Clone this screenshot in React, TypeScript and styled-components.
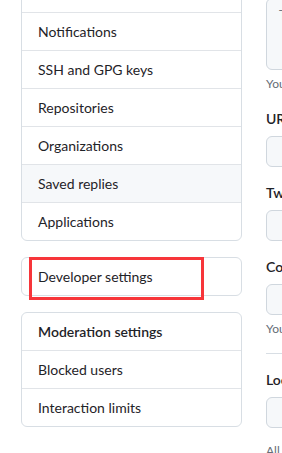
import styled, { createGlobalStyle } from 'styled-components'

const GlobalStyle = createGlobalStyle`
  html, body {
    margin: 0;
    padding: 0;
    overflow: hidden;
    background: #ffffff;
  }
  body {
    font-family: Lato, "Liberation Sans", sans-serif;
    font-size: 14px;
    color: #1f2328;
  }
`

const Page = styled.div`
  display: flex;
  align-items: flex-start;
  gap: 24px;
  padding-left: 21px;
  margin-top: -26px;
  width: 700px;
`

const Sidebar = styled.nav`
  width: 221px;
  flex: none;
  display: flex;
  flex-direction: column;
  gap: 16px;
`

const Menu = styled.div`
  position: relative;
  border: 1px solid #d8dee4;
  border-radius: 6px;
  overflow: visible;
`

const MenuItem = styled.div<{ $active?: boolean; $heading?: boolean }>`
  padding: 8px 16px;
  line-height: 21px;
  font-size: 14px;
  font-weight: ${(p) => (p.$heading ? 600 : 400)};
  background: ${(p) => (p.$active ? '#f6f8fa' : 'transparent')};
  border-top: 1px solid #e1e4e8;
  &:first-child {
    border-top: 0;
    border-radius: 6px 6px 0 0;
  }
  &:last-child {
    border-radius: 0 0 6px 6px;
  }
  &:only-child {
    border-radius: 6px;
  }
`

const Highlight = styled.div`
  position: absolute;
  left: 7px;
  top: -1px;
  width: 175px;
  height: 43px;
  box-sizing: border-box;
  border: 3px solid #f7353a;
  pointer-events: none;
`

const Form = styled.div`
  width: 440px;
  flex: none;
  margin-top: 24px;
`

const TextArea = styled.div`
  box-sizing: border-box;
  height: 72px;
  padding: 6px 12px;
  line-height: 20px;
  color: #6e7781;
  background: #f6f8fa;
  border: 1px solid #d0d7de;
  border-radius: 6px;
`

const Note = styled.p<{ $gap?: number }>`
  margin: ${(p) => p.$gap ?? 5}px 0 0;
  font-size: 12px;
  line-height: 18px;
  color: #656d76;
`

const Group = styled.div`
  margin-top: 15px;
`

const Label = styled.label`
  display: block;
  font-weight: 600;
  font-size: 14px;
  line-height: 21px;
  margin-bottom: 7px;
`

const Input = styled.div`
  box-sizing: border-box;
  height: 31px;
  background: #f6f8fa;
  border: 1px solid #d0d7de;
  border-radius: 6px;
`

const Divider = styled.hr`
  margin: 15px 0 0;
  border: 0;
  border-top: 1px solid #d8dee4;
`

const mainItems = [
  'Emails',
  'Notifications',
  'SSH and GPG keys',
  'Repositories',
  'Organizations',
  'Saved replies',
  'Applications',
]

export default function App() {
  return (
    <>
      <GlobalStyle />
      <Page>
        <Sidebar>
          <Menu>
            {mainItems.map((item) => (
              <MenuItem key={item} $active={item === 'Saved replies'}>
                {item}
              </MenuItem>
            ))}
          </Menu>
          <Menu>
            <MenuItem>Developer settings</MenuItem>
            <Highlight />
          </Menu>
          <Menu>
            <MenuItem $heading>Moderation settings</MenuItem>
            <MenuItem>Blocked users</MenuItem>
            <MenuItem>Interaction limits</MenuItem>
          </Menu>
        </Sidebar>

        <Form>
          <TextArea>Tell us a little bit about yourself</TextArea>
          <Note>You can @mention other users and organizations to link to them.</Note>
          <Group>
            <Label>URL</Label>
            <Input />
          </Group>
          <Group>
            <Label>Twitter username</Label>
            <Input />
          </Group>
          <Group>
            <Label>Company</Label>
            <Input />
            <Note>You can @mention your company's GitHub organization to link it.</Note>
          </Group>
          <Divider />
          <Group>
            <Label>Location</Label>
            <Input />
          </Group>
          <Note $gap={14}>
            All of the fields on this page are optional and can be deleted at any time.
          </Note>
        </Form>
      </Page>
    </>
  )
}
